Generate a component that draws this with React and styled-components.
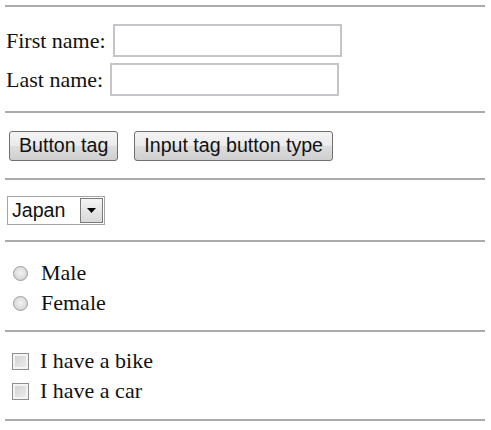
import React from 'react';
import styled, { createGlobalStyle } from 'styled-components';

const GlobalStyle = createGlobalStyle`
  html, body {
    margin: 0;
    padding: 0;
    background: #ffffff;
  }
  body {
    font-family: "Liberation Serif", "Times New Roman", serif;
    color: #111111;
  }
`;

const Page = styled.div`
  width: 491px;
  box-sizing: border-box;
  padding: 5px 6px 0 5px;
  display: flex;
  flex-direction: column;
`;

const Rule = styled.hr`
  margin: 0;
  height: 0;
  border: none;
  border-top: 2px solid #ababab;
`;

const Section = styled.div`
  display: flex;
  flex-direction: column;
  gap: ${(p) => p.$gap || 0}px;
  padding: ${(p) => p.$pad || '0'};
`;

const FieldRow = styled.div`
  display: flex;
  align-items: center;
  gap: 7px;
  padding-left: 1px;
  font-size: 22px;
`;

const TextInput = styled.input`
  width: 229px;
  height: 33px;
  box-sizing: border-box;
  margin: 0;
  border: 2px solid #c4c4c9;
  background: #ffffff;
  outline: none;
`;

const ButtonRow = styled.div`
  display: flex;
  gap: 16px;
  padding-left: 4px;
`;

const Button = styled.button`
  height: 30px;
  box-sizing: border-box;
  padding: 0 9px;
  border: 1px solid #707070;
  border-radius: 3px;
  background: linear-gradient(#f3f3f3 0%, #ebebeb 48%, #dddddd 52%, #cfcfcf 100%);
  font-family: "Liberation Sans", Arial, sans-serif;
  font-size: 19.6px;
  color: #111111;
  line-height: 1;
  cursor: pointer;
`;

const Select = styled.div`
  display: flex;
  align-items: center;
  width: 98px;
  height: 29px;
  box-sizing: border-box;
  margin-left: 2px;
  border: 1px solid #a5a5a5;
  background: #ffffff;
  font-family: "Liberation Sans", Arial, sans-serif;
  font-size: 19.6px;
`;

const SelectText = styled.span`
  flex: 1;
  padding-left: 4px;
`;

const SelectArrow = styled.span`
  width: 23px;
  height: 25px;
  margin-right: 1px;
  box-sizing: border-box;
  display: flex;
  align-items: center;
  justify-content: center;
  border: 1px solid #7a7a7a;
  background: linear-gradient(#f4f4f4, #d9d9d9);
`;

const ChoiceRow = styled.label`
  display: flex;
  align-items: center;
  height: 30px;
  gap: ${(p) => p.$gap}px;
  padding-left: ${(p) => p.$indent}px;
  font-size: 22px;
`;

const Radio = styled.span`
  width: 15px;
  height: 15px;
  box-sizing: border-box;
  border-radius: 50%;
  border: 1px solid #9c9c9c;
  background: radial-gradient(circle at 50% 45%, #f2f2f2 0%, #e2e2e2 45%, #c6c6c6 100%);
`;

const Checkbox = styled.span`
  width: 17px;
  height: 17px;
  box-sizing: border-box;
  border: 1px solid #8f8f8f;
  box-shadow: inset 0 0 0 2px #f4f4f4;
  background: linear-gradient(135deg, #d0d0d0, #eeeeee);
`;

export default function App() {
  return (
    <>
      <GlobalStyle />
      <Page>
        <Rule />
        <Section $gap={6} $pad="17px 0 15px">
          <FieldRow>
            <span>First name:</span>
            <TextInput type="text" />
          </FieldRow>
          <FieldRow>
            <span>Last name:</span>
            <TextInput type="text" />
          </FieldRow>
        </Section>
        <Rule />
        <Section $pad="18px 0 17px">
          <ButtonRow>
            <Button type="button">Button tag</Button>
            <Button type="button">Input tag button type</Button>
          </ButtonRow>
        </Section>
        <Rule />
        <Section $pad="16px 0 15px">
          <Select>
            <SelectText>Japan</SelectText>
            <SelectArrow>
              <svg width="9" height="5" viewBox="0 0 9 5">
                <path d="M0 0 H9 L4.5 5 Z" fill="#000" />
              </svg>
            </SelectArrow>
          </Select>
        </Section>
        <Rule />
        <Section $pad="16px 0 12px">
          <ChoiceRow $gap={13} $indent={8}>
            <Radio /> Male
          </ChoiceRow>
          <ChoiceRow $gap={13} $indent={8}>
            <Radio /> Female
          </ChoiceRow>
        </Section>
        <Rule />
        <Section $pad="14px 0 13px">
          <ChoiceRow $gap={11} $indent={7}>
            <Checkbox /> I have a bike
          </ChoiceRow>
          <ChoiceRow $gap={11} $indent={7}>
            <Checkbox /> I have a car
          </ChoiceRow>
        </Section>
        <Rule />
      </Page>
    </>
  );
}
